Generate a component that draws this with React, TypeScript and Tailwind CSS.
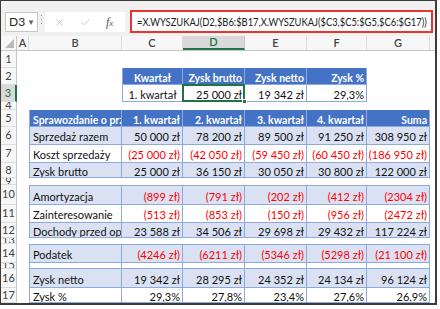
import React from "react";
import { X, Check } from "lucide-react";

type Kind = "none" | "head" | "band" | "plain";

interface ReportRow {
  n: number;
  h: string;
  k?: Kind;
  label?: string;
  vals?: string[];
  red?: boolean;
  top?: boolean;
}

// widths of columns B..G
const W = ["w-[93px]", "w-[61px]", "w-[62px]", "w-[62px]", "w-[60px]", "w-[63px]"];
const LETTERS = ["B", "C", "D", "E", "F", "G"];

const kindCls: Record<Kind, string> = {
  none: "bg-white",
  head: "bg-[#4472C4] text-white font-bold text-[10.5px] border-r border-b border-[#8EA9DB]",
  band: "bg-[#D9E1F2] text-[#111] border-r border-b border-[#8EA9DB]",
  plain: "bg-white text-[#111] border-r border-b border-[#8EA9DB]",
};

const report: ReportRow[] = [
  { n: 5, h: "h-[17px]", k: "head", label: "Sprawozdanie o przychodach", vals: ["1. kwartał", "2. kwartał", "3. kwartał", "4. kwartał", "Suma"] },
  { n: 6, h: "h-[18px]", k: "band", label: "Sprzedaż razem", vals: ["50 000 zł", "78 200 zł", "89 500 zł", "91 250 zł", "308 950 zł"] },
  { n: 7, h: "h-[18px]", k: "plain", label: "Koszt sprzedaży", vals: ["(25 000 zł)", "(42 050 zł)", "(59 450 zł)", "(60 450 zł)", "(186 950 zł)"], red: true },
  { n: 8, h: "h-[15px]", k: "band", label: "Zysk brutto", vals: ["25 000 zł", "36 150 zł", "30 050 zł", "30 800 zł", "122 000 zł"] },
  { n: 9, h: "h-[7px]" },
  { n: 10, h: "h-[20px]", k: "band", top: true, label: "Amortyzacja", vals: ["(899 zł)", "(791 zł)", "(202 zł)", "(412 zł)", "(2304 zł)"], red: true },
  { n: 11, h: "h-[18px]", k: "plain", label: "Zainteresowanie", vals: ["(513 zł)", "(853 zł)", "(150 zł)", "(956 zł)", "(2472 zł)"], red: true },
  { n: 12, h: "h-[15px]", k: "band", label: "Dochody przed opodatkowaniem", vals: ["23 588 zł", "34 506 zł", "29 698 zł", "29 432 zł", "117 224 zł"] },
  { n: 13, h: "h-[6px]" },
  { n: 14, h: "h-[19px]", k: "band", top: true, label: "Podatek", vals: ["(4246 zł)", "(6211 zł)", "(5346 zł)", "(5298 zł)", "(21 100 zł)"], red: true },
  { n: 15, h: "h-[6px]", k: "plain", label: "", vals: ["", "", "", "", ""] },
  { n: 16, h: "h-[19px]", k: "band", label: "Zysk netto", vals: ["19 342 zł", "28 295 zł", "24 352 zł", "24 134 zł", "96 124 zł"] },
  { n: 17, h: "h-[15px]", k: "plain", label: "Zysk %", vals: ["29,3%", "27,8%", "23,4%", "27,6%", "26,9%"] },
];

function RowHead({ n }: { n: number }) {
  const sel = n === 3;
  return (
    <div
      className={`w-[16px] shrink-0 flex items-center justify-center overflow-hidden text-[11px] border-b border-[#dcdcdc] ${
        sel
          ? "bg-[#d9d9d9] text-[#217346] border-r-2 border-r-[#217346]"
          : "bg-[#f7f7f7] text-[#444] border-r border-r-[#c6c6c6]"
      }`}
    >
      {n}
    </div>
  );
}

function Cell({
  w,
  cls = "",
  align = "r",
  children,
}: {
  w: string;
  cls?: string;
  align?: "l" | "r" | "c";
  children?: React.ReactNode;
}) {
  const a = align === "l" ? "pl-[3px]" : align === "c" ? "justify-center" : "justify-end pr-[2px]";
  return (
    <div className={`${w} shrink-0 flex items-center overflow-hidden whitespace-nowrap leading-[12px] pt-[3px] ${a} ${cls}`}>
      {children}
    </div>
  );
}

function Line({ n, h, children }: { n: number; h: string; children?: React.ReactNode }) {
  return (
    <div className={`flex ${h}`}>
      <RowHead n={n} />
      <div className="w-[12px] shrink-0 bg-white" />
      {children}
      <div className="flex-1 bg-white" />
    </div>
  );
}

function BlankCells() {
  return (
    <>
      {W.map((w, i) => (
        <div key={i} className={`${w} shrink-0 bg-white`} />
      ))}
    </>
  );
}

function FormulaBar() {
  return (
    <div className="flex items-start h-[35px] bg-[#f1f1f1] pl-[4px] pr-[2px]">
      <div className="mt-[11px] w-[33px] h-[20px] bg-white border border-[#c6c6c6] flex items-center justify-between pl-[3px] pr-[2px]">
        <span className="text-[12px] text-[#222]">D3</span>
        <span className="text-[8px] text-[#666]">▼</span>
      </div>
      <div className="mt-[14px] ml-[2px] w-[3px] flex flex-col items-center gap-[3px]">
        <span className="w-[1px] h-[1px] bg-[#9a9a9a]" />
        <span className="w-[1px] h-[1px] bg-[#9a9a9a]" />
        <span className="w-[1px] h-[1px] bg-[#9a9a9a]" />
      </div>
      <div className="mt-[11px] ml-[2px] w-[80px] h-[20px] bg-white flex items-center pl-[9px]">
        <X size={11} strokeWidth={1.5} className="text-[#b5b5b5]" />
        <Check size={11} strokeWidth={1.5} className="ml-[15px] text-[#b5b5b5]" />
        <span className="ml-[15px] font-['Liberation_Serif',serif] italic text-[12px] text-[#555]">
          f<span className="text-[9px]">x</span>
        </span>
      </div>
      <div className="mt-[9px] ml-[5px] flex-1 h-[23px] border-2 border-[#E8332F] bg-white flex items-center pl-[5px] text-[#222] whitespace-nowrap overflow-hidden">
        <span className="inline-block origin-left scale-x-[0.815] text-[11.5px]">
          =X.WYSZUKAJ(D2,$B6:$B17,X.WYSZUKAJ($C3,$C5:$G5,$C6:$G17))
        </span>
      </div>
    </div>
  );
}

function ColumnHeads() {
  return (
    <div className="flex h-[15px] bg-[#f7f7f7] border-b border-[#c6c6c6] text-[11px] font-semibold text-[#444]">
      <div className="w-[16px] shrink-0 border-r border-[#c6c6c6] flex items-end justify-end pr-[2px] pb-[2px]">
        <svg width="9" height="9" viewBox="0 0 9 9">
          <polygon points="9,0 9,9 0,9" fill="#b8b8b8" />
        </svg>
      </div>
      <div className="w-[12px] shrink-0 border-r border-[#dcdcdc] flex items-center justify-center">A</div>
      {W.map((w, i) =>
        LETTERS[i] === "D" ? (
          <div
            key={i}
            className={`${w} shrink-0 bg-[#d9d9d9] text-[#217346] border-r border-[#c6c6c6] border-b-2 border-b-[#217346] flex items-center justify-center`}
          >
            D
          </div>
        ) : (
          <div key={i} className={`${w} shrink-0 border-r border-[#dcdcdc] flex items-center justify-center`}>
            {LETTERS[i]}
          </div>
        )
      )}
      <div className="flex-1" />
    </div>
  );
}

export default function App() {
  const head = "bg-[#4472C4] text-white font-bold text-[10.5px] border-r border-b border-[#8EA9DB]";
  const plain = "bg-white text-[#111] border-r border-b border-[#8EA9DB]";

  return (
    <div className="w-[440px] h-[309px] bg-white font-['Lato','Liberation_Sans',sans-serif] text-[11px]">
      <div className="w-[437px] h-[305px] border-l border-t border-r-2 border-b-2 border-[#3c3c3c] overflow-hidden flex flex-col">
        <FormulaBar />
        <ColumnHeads />

        <Line n={1} h="h-[17px]">
          <BlankCells />
        </Line>

        <Line n={2} h="h-[17px]">
          <div className={`${W[0]} shrink-0 bg-white`} />
          <Cell w={W[1]} cls={`${head} border-l`} align="c">Kwartał</Cell>
          <Cell w={W[2]} cls={head}>Zysk brutto</Cell>
          <Cell w={W[3]} cls={head}>Zysk netto</Cell>
          <Cell w={W[4]} cls={head}>Zysk %</Cell>
          <div className={`${W[5]} shrink-0 bg-white`} />
        </Line>

        <Line n={3} h="h-[17px]">
          <div className={`${W[0]} shrink-0 bg-white`} />
          <Cell w={W[1]} cls={`${plain} border-l`} align="c">1. kwartał</Cell>
          <Cell w={W[2]} cls={`${plain} relative overflow-visible`}>
            25 000 zł
            <div className="absolute -left-[1px] -top-[1px] -right-[1px] -bottom-[1px] border-2 border-[#217346]" />
            <div className="absolute -right-[3px] -bottom-[3px] w-[5px] h-[5px] bg-[#217346] border border-white" />
          </Cell>
          <Cell w={W[3]} cls={plain}>19 342 zł</Cell>
          <Cell w={W[4]} cls={plain}>29,3%</Cell>
          <div className={`${W[5]} shrink-0 bg-white`} />
        </Line>

        <Line n={4} h="h-[8px]">
          <BlankCells />
        </Line>

        {report.map((r) =>
          !r.k ? (
            <Line key={r.n} n={r.n} h={r.h}>
              <BlankCells />
            </Line>
          ) : (
            <Line key={r.n} n={r.n} h={r.h}>
              <Cell
                w={W[0]}
                align="l"
                cls={`${kindCls[r.k]} border-l ${r.top ? "border-t" : ""} ${r.k === "head" ? "text-[10.5px]" : ""}`}
              >
                {r.label}
              </Cell>
              {r.vals!.map((v, i) => (
                <Cell
                  key={i}
                  w={W[i + 1]}
                  cls={`${kindCls[r.k!]} ${r.top ? "border-t" : ""} ${r.k === "head" ? "text-[10.5px]" : ""} ${
                    r.red ? "text-[#FF0000]" : ""
                  }`}
                >
                  {v}
                </Cell>
              ))}
            </Line>
          )
        )}
      </div>
    </div>
  );
}
